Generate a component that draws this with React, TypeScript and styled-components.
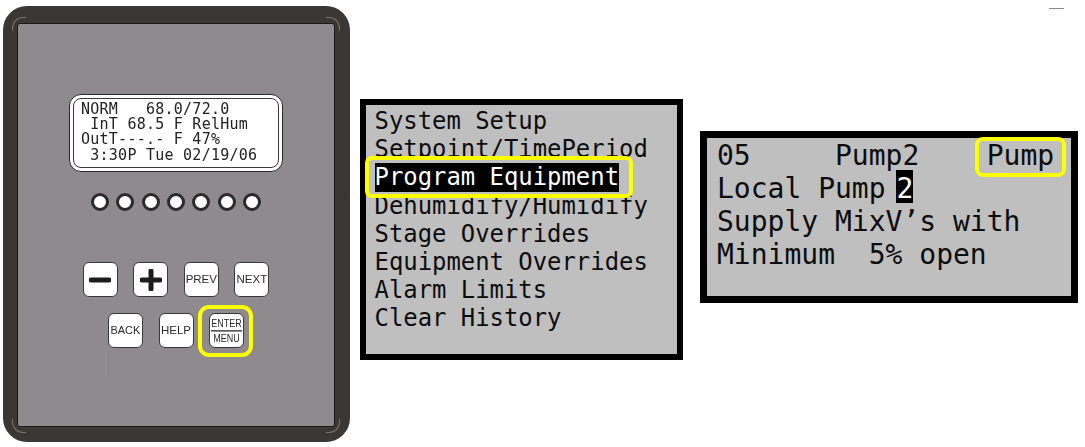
import React from 'react';
import styled, { createGlobalStyle } from 'styled-components';

const GlobalStyle = createGlobalStyle`
  html, body {
    margin: 0;
    padding: 0;
    background: #fff;
  }
`;

const mono = `"DejaVu Sans Mono", "Liberation Mono", monospace`;

// Page
const Page = styled.div`
  position: relative;
  width: 1085px;
  height: 447px;
  overflow: hidden;
  display: flex;
  align-items: flex-start;
`;

const StrayMark = styled.div`
  position: absolute;
  top: 8px;
  left: 1049px;
  width: 15px;
  height: 1px;
  background: #8a8a8a;
`;

// Controller
const Bezel = styled.div`
  box-sizing: border-box;
  width: 347px;
  height: 436px;
  margin: 6px 0 0 3px;
  padding: 17px 15px 15px 14px;
  border-radius: 24px;
  background: #3b3734;
`;

const Faceplate = styled.div`
  position: relative;
  box-sizing: border-box;
  height: 100%;
  padding-top: 70px;
  display: flex;
  flex-direction: column;
  align-items: center;
  background: #8e8a8d;
  border: 1px solid #1c1a19;
  border-radius: 3px;

  /* faint scratch under the BACK key */
  &::after {
    content: '';
    position: absolute;
    left: 90px;
    top: 327px;
    width: 1px;
    height: 25px;
    background: #858185;
  }
`;

// little crescents that sit in the bezel corners
const CornerArc = styled.div<{ $bottom?: boolean; $right?: boolean }>`
  position: absolute;
  ${props => (props.$bottom ? 'bottom' : 'top')}: -7px;
  ${props => (props.$right ? 'right' : 'left')}: -6px;
  width: 13px;
  height: 13px;
  border-radius: ${props =>
    props.$bottom
      ? props.$right ? '0 0 11px 0' : '0 0 0 11px'
      : props.$right ? '0 11px 0 0' : '11px 0 0 0'};
  border-${props => (props.$bottom ? 'bottom' : 'top')}: 1.5px solid #77726f;
  border-${props => (props.$right ? 'right' : 'left')}: 1.5px solid #77726f;
`;

const LcdFrame = styled.div`
  box-sizing: border-box;
  width: 214px;
  height: 78px;
  padding: 3px;
  background: #fff;
  border: 1.5px solid #2b2a2a;
  border-radius: 12px;
`;

const LcdScreen = styled.div`
  box-sizing: border-box;
  height: 100%;
  padding: 3px 0 0 7px;
  border: 1.5px solid #3a3939;
  border-radius: 8px;
  font-family: ${mono};
  font-size: 15px;
  letter-spacing: 0.25px;
  line-height: 15.2px;
  color: #232323;
  white-space: pre;
  filter: blur(0.3px);
`;

const LedRow = styled.div`
  display: flex;
  gap: 7.3px;
  margin-top: 21px;
`;

const Led = styled.div`
  box-sizing: border-box;
  width: 18px;
  height: 18px;
  border-radius: 50%;
  background: #fff;
  border: 3px solid #2c2a2a;
`;

const KeyRow = styled.div<{ $top: number }>`
  display: flex;
  gap: 15.6px;
  margin-top: ${props => props.$top}px;
`;

const Key = styled.div<{ $ringed?: boolean; $size?: number }>`
  position: relative;
  box-sizing: border-box;
  width: 35px;
  height: 35px;
  display: flex;
  flex-direction: column;
  align-items: center;
  justify-content: center;
  background: #fff;
  border: 1.5px solid #3a3838;
  border-radius: 6px;
  font-family: "Liberation Sans", Arial, sans-serif;
  font-size: ${props => props.$size || 11.5}px;
  line-height: 1;
  color: #2a2a2a;
  filter: blur(0.25px);

  ${props => props.$ringed && `
    &::after {
      content: '';
      position: absolute;
      top: -9.5px;
      bottom: -9.5px;
      left: -12px;
      right: -10px;
      border: 4px solid #ffff00;
      border-radius: 11px;
    }
  `}
`;

const KeyLine = styled.span<{ $rule?: boolean }>`
  padding: 1px 0;
  font-size: 9px;
  transform: scaleY(1.25);
  ${props => props.$rule && 'border-bottom: 1px solid #222; margin-bottom: 3px;'}
`;

const KeyIcon = styled.svg`
  width: 22px;
  height: 22px;
  fill: none;
  stroke: #1c1c1c;
  stroke-width: 5;
  stroke-linecap: round;
`;

// Text screens
const Screen = styled.div<{ $left: number; $top: number; $width: number; $height: number; $border: number }>`
  box-sizing: border-box;
  width: ${props => props.$width}px;
  height: ${props => props.$height}px;
  margin: ${props => props.$top}px 0 0 ${props => props.$left}px;
  border: ${props => props.$border}px solid #000;
  background: #bfbfbf;
  font-family: ${mono};
  color: #0c0c0c;
  white-space: pre;
`;

const MenuList = styled.div`
  padding: 2px 0 0 8.5px;
  font-size: 23.9px;
  line-height: 28.2px;
`;

const SelectedRow = styled.div`
  position: relative;
  z-index: 1;

  &::before {
    content: '';
    position: absolute;
    z-index: -1;
    box-sizing: border-box;
    top: -7px;
    bottom: -6px;
    left: -10px;
    width: 268px;
    background: #bfbfbf;
    border: 4px solid #ffff00;
    border-radius: 7px;
  }
`;

const SelectedText = styled.span`
  display: inline-block;
  background: #000;
  color: #fff;
`;

const CursorDigit = styled.span`
  display: inline-block;
  margin: -3px 0 0 -6px;
  padding-top: 4px;
  line-height: 29px;
  background: #000;
  color: #fff;
`;

const DetailText = styled.div`
  padding: 2px 0 0 10px;
  font-size: 28px;
  line-height: 32.9px;
`;

const RingedWord = styled.span`
  position: relative;

  &::after {
    content: '';
    position: absolute;
    box-sizing: border-box;
    top: -2px;
    bottom: -5px;
    left: -12px;
    right: -12px;
    border: 4px solid #ffff00;
    border-radius: 8px;
  }
`;

const lcdLines = ['NORM   68.0/72.0', ' InT 68.5 F RelHum', 'OutT---.- F 47%', ' 3:30P Tue 02/19/06'];
const menuItems = ['System Setup', 'Setpoint/TimePeriod', 'Program Equipment', 'Dehumidify/Humidify', 'Stage Overrides', 'Equipment Overrides', 'Alarm Limits', 'Clear History'];

const App: React.FC = () => {
  return (
    <Page>
      <GlobalStyle />
      <Bezel>
        <Faceplate>
          <CornerArc />
          <CornerArc $right />
          <CornerArc $bottom />
          <CornerArc $bottom $right />
          <LcdFrame>
            <LcdScreen>
              {lcdLines.map(line => <div key={line}>{line}</div>)}
            </LcdScreen>
          </LcdFrame>
          <LedRow>
            {[0, 1, 2, 3, 4, 5, 6].map(i => <Led key={i} />)}
          </LedRow>
          <KeyRow $top={51}>
            <Key>
              <KeyIcon viewBox="0 0 22 22"><path d="M2 11h18" /></KeyIcon>
            </Key>
            <Key>
              <KeyIcon viewBox="0 0 22 22"><path d="M2 11h18M11 2v18" /></KeyIcon>
            </Key>
            <Key>PREV</Key>
            <Key>NEXT</Key>
          </KeyRow>
          <KeyRow $top={16}>
            <Key $size={11}>BACK</Key>
            <Key>HELP</Key>
            <Key $ringed>
              <KeyLine $rule>ENTER</KeyLine>
              <KeyLine>MENU</KeyLine>
            </Key>
          </KeyRow>
        </Faceplate>
      </Bezel>

      <Screen $left={10} $top={99} $width={323} $height={261} $border={6}>
        <MenuList>
          {menuItems.map(item =>
            item === 'Program Equipment' ? (
              <SelectedRow key={item}><SelectedText>{item}</SelectedText></SelectedRow>
            ) : (
              <div key={item}>{item}</div>
            )
          )}
        </MenuList>
      </Screen>

      <Screen $left={17} $top={131} $width={378} $height={172} $border={7}>
        <DetailText>
          <div>{'05     Pump2    '}<RingedWord>Pump</RingedWord></div>
          <div>{'Local Pump '}<CursorDigit>2</CursorDigit></div>
          <div>Supply MixV’s with</div>
          <div>Minimum  5% open</div>
        </DetailText>
      </Screen>

      <StrayMark />
    </Page>
  );
};

export default App;
